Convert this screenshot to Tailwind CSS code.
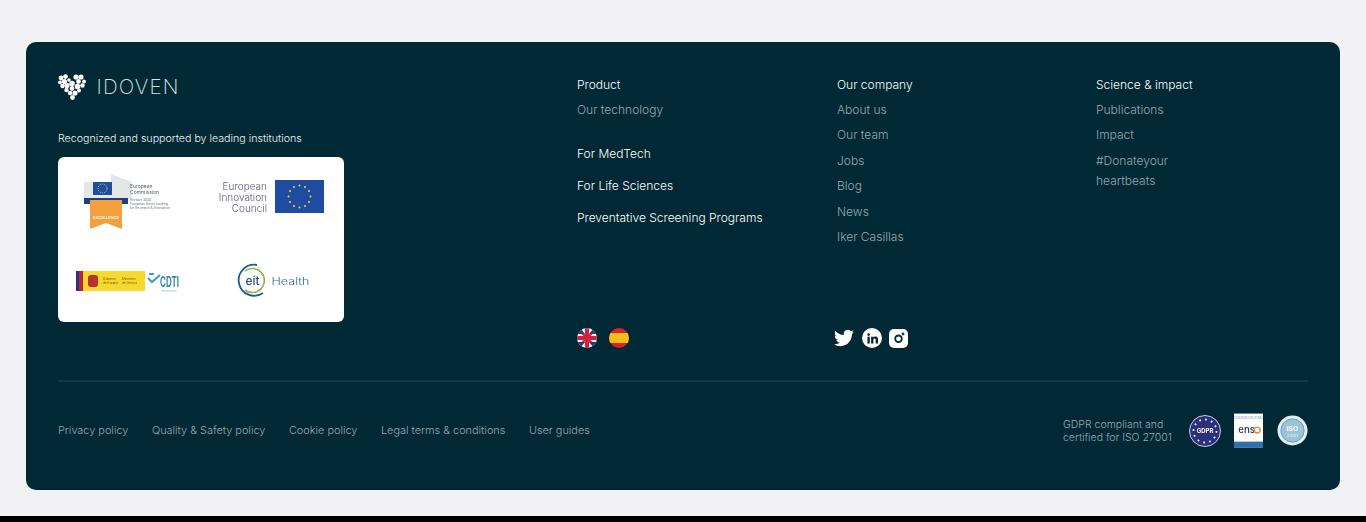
<!DOCTYPE html>
<html lang="en">
<head>
    <meta charset="UTF-8">
    <meta name="viewport" content="width=device-width, initial-scale=1.0">
    <title>Idoven footer</title>
    <script src="https://cdn.jsdelivr.net/npm/@tailwindcss/browser@4"></script>
</head>
<body class="bg-[#f2f2f5] h-[522px] overflow-hidden font-['Inter',sans-serif]">
    <div class="h-[516px] pt-[42px] px-[26px]">
        <footer class="bg-[#012835] rounded-[10px] h-[448px] px-[32px] pt-[33px]">
            <!-- Top part -->
            <div class="flex h-[307px] border-b-2 border-[#0f3a47]">
                <!-- Logo and institutions -->
                <div class="w-[519px]">
                    <div class="flex items-center h-[26px] mt-[-1px]">
                        <svg class="w-[28px] h-[26px] ml-[-0.5px]" viewBox="0 0 28 26" fill="#ffffff">
                            <circle cx="3" cy="4" r="2.400"/><circle cx="7.500" cy="2.600" r="2.400"/><circle cx="2" cy="8.500" r="2"/><circle cx="6.500" cy="7.500" r="2.600"/>
                            <circle cx="11" cy="6" r="1.800"/><circle cx="4.500" cy="12" r="2.200"/><circle cx="9" cy="11.500" r="2.600"/><circle cx="14" cy="9.500" r="2.800"/>
                            <circle cx="18" cy="3" r="2.600"/><circle cx="23" cy="3" r="2.600"/><circle cx="26" cy="7.500" r="2"/><circle cx="20.500" cy="7.500" r="2.400"/>
                            <circle cx="24.500" cy="11.500" r="2.200"/><circle cx="19.500" cy="12.500" r="2.800"/><circle cx="14" cy="14.500" r="2.400"/><circle cx="8.500" cy="16" r="2.200"/>
                            <circle cx="21" cy="16.500" r="2"/><circle cx="12" cy="19" r="2.200"/><circle cx="17" cy="19" r="2.600"/><circle cx="14.500" cy="23.500" r="2.400"/>
                        </svg>
                        <span class="ml-[11px] text-[20.500px] leading-none font-[200] tracking-[1.200px] text-[#d5e6ea]">IDOVEN</span>
                    </div>
                    <p class="mt-[29px] text-[10.650px] leading-[20px] font-[350] text-[#f0f5f6]">Recognized and supported by leading institutions</p>
                    <!-- Institution logos -->
                    <div class="mt-[8px] w-[286px] h-[165px] bg-white rounded-[6px] grid grid-cols-2 grid-rows-2">
                        <div class="flex items-center justify-center">
                            <svg class="w-[140px] h-[80px] blur-[0.3px]" viewBox="0 0 140 80">
                                <g transform="translate(0 3)">
                                <path d="M24 21 L51 21 L51 13 L72 21 L72 38 L24 38 Z" fill="#e4e6e8"/>
                                <rect x="33" y="21" width="19" height="13" fill="#1c4f9f"/>
                                <circle cx="42.500" cy="27.500" r="4.500" fill="none" stroke="#f4d24a" stroke-width="1" stroke-dasharray="1 1.200"/>
                                <rect x="24" y="37" width="44" height="6" fill="#1f3f78"/>
                                <path d="M30 39 H62 V68 L46 62 L30 68 Z" fill="#f3a03f"/>
                                <text x="46" y="58" text-anchor="middle" font-size="4" font-weight="700" fill="#fff3df">EXCELLENCE</text>
                                <text x="70" y="27" font-size="5" fill="#555d66">European</text>
                                <text x="70" y="33" font-size="5" fill="#555d66">Commission</text>
                                <text x="70" y="40" font-size="3.300" fill="#6b7280">Horizon 2020</text>
                                <text x="70" y="44" font-size="3.300" fill="#6b7280">European Union funding</text>
                                <text x="70" y="48" font-size="3.300" fill="#6b7280">for Research &amp; Innovation</text>
                                </g>
                            </svg>
                        </div>
                        <div class="flex items-center justify-center">
                            <svg class="w-[140px] h-[80px] blur-[0.2px]" viewBox="0 0 140 80">
                                <g font-size="10" font-weight="300" fill="#5b5580" text-anchor="end">
                                    <text x="64" y="32">European</text>
                                    <text x="64" y="43">Innovation</text>
                                    <text x="64" y="54">Council</text>
                                </g>
                                <rect x="72" y="22" width="49" height="33" fill="#1f4ba0"/>
                                <g fill="#f5d63d">
                                    <circle cx="96.500" cy="27.500" r="1"/><circle cx="102" cy="29" r="1"/><circle cx="106" cy="33" r="1"/><circle cx="107.500" cy="38.500" r="1"/>
                                    <circle cx="106" cy="44" r="1"/><circle cx="102" cy="48" r="1"/><circle cx="96.500" cy="49.500" r="1"/><circle cx="91" cy="48" r="1"/>
                                    <circle cx="87" cy="44" r="1"/><circle cx="85.500" cy="38.500" r="1"/><circle cx="87" cy="33" r="1"/><circle cx="91" cy="29" r="1"/>
                                </g>
                            </svg>
                        </div>
                        <div class="flex items-center justify-center">
                            <svg class="w-[140px] h-[70px] blur-[0.3px]" viewBox="0 0 140 70">
                                <g transform="translate(0 4)">
                                <rect x="16" y="21" width="69" height="20" fill="#f7d92c"/>
                                <rect x="16" y="21" width="3" height="20" fill="#2d2f7d"/>
                                <rect x="19" y="21" width="4" height="20" fill="#b5263a"/>
                                <rect x="28" y="25" width="10" height="12" rx="3" fill="#b8332e"/>
                                <g fill="#6b5a1e" font-size="3">
                                    <text x="43" y="30">Gobierno</text>
                                    <text x="43" y="34">de España</text>
                                    <text x="62" y="30">Ministerio</text>
                                    <text x="62" y="34">de Ciencia</text>
                                </g>
                                <path d="M88 28 L92 32 L100 25 M89 24 H94" fill="none" stroke="#3f9fc9" stroke-width="2.200"/>
                                <text x="100" y="37" font-size="14" font-weight="700" fill="#3285ad" textLength="19" lengthAdjust="spacingAndGlyphs">CDTI</text>
                                <text x="101" y="41.500" font-size="3" fill="#8bbdd3">Innovación</text>
                                </g>
                            </svg>
                        </div>
                        <div class="flex items-center justify-center">
                            <svg class="w-[140px] h-[70px] blur-[0.2px]" viewBox="0 0 140 70">
                                <path d="M54 19 A15.500 15.500 0 1 0 60 47" fill="none" stroke="#1f5c8b" stroke-width="1.800"/>
                                <path d="M58 25 A12 12 0 1 0 58 44" fill="none" stroke="#8cb94a" stroke-width="1.600" transform="rotate(180 50 34.500)"/>
                                <text x="49.500" y="39" text-anchor="middle" font-size="12" font-weight="500" fill="#1f4f7a">eit</text>
                                <text x="68.500" y="39" font-size="10" font-weight="300" fill="#2f6d98" textLength="38" lengthAdjust="spacingAndGlyphs">Health</text>
                            </svg>
                        </div>
                    </div>
                </div>
                <!-- Product -->
                <div class="w-[260px] relative">
                    <p class="text-[12px] leading-[20px] font-[350] text-white">Product</p>
                    <p class="mt-[5px] text-[12px] leading-[20px] font-[350] text-[#93abb3]">Our technology</p>
                    <p class="mt-[24px] text-[12px] leading-[20px] font-[350] text-white">For MedTech</p>
                    <p class="mt-[12px] text-[12px] leading-[20px] font-[350] text-white">For Life Sciences</p>
                    <p class="mt-[12px] text-[12px] leading-[20px] font-[350] text-white">Preventative Screening Programs</p>
                    <div class="flex gap-[12px] mt-[100px]">
                        <svg class="w-[20px] h-[20px] rounded-full" viewBox="0 0 20 20">
                            <rect width="20" height="20" fill="#f2f2f2"/>
                            <path d="M0 0 L20 20 M20 0 L0 20" stroke="#d4213d" stroke-width="2"/>
                            <path d="M3 0 L8 6 H0 Z M17 0 L12 6 H20 Z M3 20 L8 14 H0 Z M17 20 L12 14 H20 Z" fill="#2d3a6e"/>
                            <rect x="8" width="4" height="20" fill="#d4213d"/>
                            <rect y="8" width="20" height="4" fill="#d4213d"/>
                        </svg>
                        <svg class="w-[20px] h-[20px] rounded-full" viewBox="0 0 20 20">
                            <rect width="20" height="20" fill="#d8232a"/>
                            <rect y="5" width="20" height="10" fill="#f6bd1d"/>
                        </svg>
                    </div>
                </div>
                <!-- Our company -->
                <div class="w-[259px] relative">
                    <p class="text-[12px] leading-[20px] font-[350] text-white">Our company</p>
                    <div class="flex flex-col gap-[5.400px] mt-[5px] text-[12px] leading-[20px] font-[350] text-[#93abb3]">
                        <p>About us</p><p>Our team</p><p>Jobs</p><p>Blog</p><p>News</p><p>Iker Casillas</p>
                    </div>
                    <div class="absolute left-[-3px] top-[253px] flex items-center gap-[8px]">
                        <svg class="w-[20px] h-[20px]" viewBox="0 0 24 24" fill="#ffffff"><path d="M23.950 4.570a10 10 0 0 1-2.820.770 4.960 4.960 0 0 0 2.160-2.720c-.950.550-2 .950-3.130 1.190a4.920 4.920 0 0 0-8.380 4.480C7.690 8.090 4.070 6.130 1.640 3.160a4.820 4.820 0 0 0-.660 2.470c0 1.710.870 3.210 2.190 4.100a4.900 4.900 0 0 1-2.230-.620v.060a4.920 4.920 0 0 0 3.950 4.830 5 5 0 0 1-2.210.080 4.940 4.940 0 0 0 4.600 3.420A9.870 9.870 0 0 1 0 19.540a14 14 0 0 0 7.560 2.210c9.050 0 14-7.500 14-13.980 0-.210 0-.420-.020-.630a9.940 9.940 0 0 0 2.410-2.550z"/></svg>
                        <div class="w-[20px] h-[20px] rounded-full bg-white flex items-center justify-center">
                            <svg class="w-[11px] h-[11px]" viewBox="0 0 24 24" fill="#012835"><path d="M1 8h5v15H1z"/><circle cx="3.500" cy="3.500" r="2.800"/><path d="M9 8h4.800v2.100c.700-1.300 2.300-2.500 4.700-2.500 5 0 5.500 3.300 5.500 7.500V23h-5v-7c0-1.700 0-3.800-2.300-3.800s-2.700 1.800-2.700 3.700V23H9z"/></svg>
                        </div>
                        <div class="w-[19px] h-[19px] ml-[-1px] rounded-[5px] bg-white flex items-center justify-center">
                            <svg class="w-[13px] h-[13px]" viewBox="0 0 13 13" fill="none" stroke="#012835" stroke-width="1.800"><circle cx="6.500" cy="6.800" r="3.300"/><circle cx="11" cy="2" r=".5"/></svg>
                        </div>
                    </div>
                </div>
                <!-- Science & impact -->
                <div class="flex-1">
                    <p class="text-[12px] leading-[20px] font-[350] text-white">Science &amp; impact</p>
                    <div class="flex flex-col gap-[5.400px] mt-[5px] text-[12px] leading-[20px] font-[350] text-[#93abb3]">
                        <p>Publications</p><p>Impact</p><p class="w-[100px]">#Donateyour heartbeats</p>
                    </div>
                </div>
            </div>
            <!-- Bottom part -->
            <div class="flex items-center justify-between h-[97px] text-[10.900px] font-[350] text-[#93abb3]">
                <div class="flex gap-[23.500px]">
                    <span>Privacy policy</span><span>Quality &amp; Safety policy</span><span>Cookie policy</span><span>Legal terms &amp; conditions</span><span>User guides</span>
                </div>
                <div class="flex items-center">
                    <p class="leading-[13px] w-[126px] text-[10.500px]">GDPR compliant and certified for ISO 27001</p>
                    <svg class="w-[32px] h-[32px] blur-[0.3px]" viewBox="0 0 32 32">
                        <circle cx="16" cy="16" r="15.500" fill="#2c2f7c" stroke="#c9cbe8"/>
                        <circle cx="16" cy="16" r="11.500" fill="none" stroke="#e8e9f7" stroke-width="1.800" stroke-dasharray="1.800 4.200"/>
                        <text x="16" y="18" text-anchor="middle" font-size="6" font-weight="700" fill="#ffffff">GDPR</text>
                    </svg>
                    <svg class="w-[29px] h-[35px] ml-[13px] blur-[0.3px]" viewBox="0 0 30 35">
                        <rect width="30" height="35" fill="#ffffff"/>
                        <rect y="29" width="30" height="6" fill="#2d70ae"/>
                        <text x="13" y="20" text-anchor="middle" font-size="10" font-weight="500" fill="#23384d">ens</text>
                        <circle cx="24" cy="17" r="3" fill="none" stroke="#e58b3a" stroke-width="1.500"/>
                        <text x="15" y="6" text-anchor="middle" font-size="3" fill="#6b7c8c">ESQUEMA NACIONAL</text>
                    </svg>
                    <svg class="w-[31px] h-[31px] ml-[14px] blur-[0.3px]" viewBox="0 0 32 32">
                        <circle cx="16" cy="16" r="15.500" fill="#e4eff4"/>
                        <circle cx="16" cy="16" r="12" fill="#9cc3d6" stroke="#5d9cbd" stroke-width="1"/>
                        <text x="16" y="17" text-anchor="middle" font-size="7" font-weight="700" fill="#ffffff">ISO</text>
                        <text x="16" y="23" text-anchor="middle" font-size="4" fill="#ffffff">27001</text>
                    </svg>
                </div>
            </div>
        </footer>
    </div>
    <div class="h-[6px] bg-black"></div>
</body>
</html>
